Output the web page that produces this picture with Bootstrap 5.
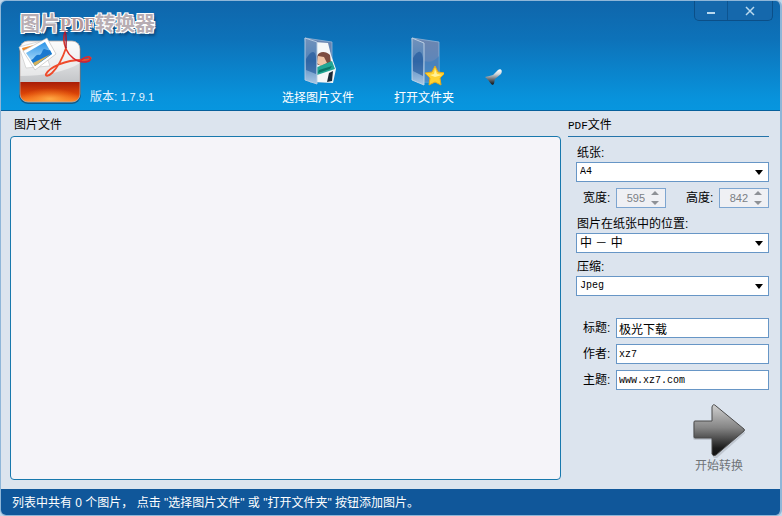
<!DOCTYPE html>
<html lang="zh-CN">
<head>
<meta charset="utf-8">
<meta name="viewport" content="width=device-width, initial-scale=1">
<title>图片PDF转换器</title>
<link href="https://cdn.jsdelivr.net/npm/bootstrap@5.3.0/dist/css/bootstrap.min.css" rel="stylesheet">
<style>
  body { font: 12px/16px "Liberation Sans", "Noto Sans CJK SC", sans-serif; color: #000; background: #c3d8ea; }
  .app-window { border: solid #8fb6d8; border-width: 1px 2px 1px 1px; border-radius: 6px; overflow: hidden; background: #dce4ee; }
  .app-header { height: 110px; background: linear-gradient(#0f66ab, #0d72b9 35%, #0893dc 90%, #0796df); border-bottom: 1px solid #06609c; color: #fff; }
  .brand { width: 264px; padding: 9px 0 0 17px; }
  .app-title { font: bold 20px/26px "Noto Sans CJK SC", sans-serif; color: #b7adb3; white-space: nowrap; padding-left: 2px;
    text-shadow: -1px -1px #fff, 1px -1px #fff, -1px 1px #fff, 1px 1px #fff, 2px 3px 3px #0a3c6c; }
  .latin { font-family: "Liberation Serif", serif; font-size: 18px; line-height: 1; color: #b59a9c; }
  .logo { width: 74px; height: 70px; flex: none; }
  .version { color: #e4f3ff; font-size: 11px; margin: 0 0 1px -2px; white-space: nowrap; }
  .version .cjk { font-size: 12px; }
  .tool { width: 106px; padding-top: 35px; line-height: 16px; }
  .tool svg { width: 40px; height: 54px; display: block; margin: 0 auto; }
  .pin { margin-top: 66px; margin-left: 7px; }
  .win-controls { height: 20px; margin-right: 7px; border: 1px solid #0b4f88; border-top: 0; border-radius: 0 0 5px 5px; background: #1568ac; }
  .win-controls button { color: #b9d9ef; line-height: 0; }
  .win-min { width: 33px; border-right: 1px solid #0d5490 !important; }
  .win-close { width: 44px; }
  button { color: inherit; font: inherit; }
  .section-title { font-size: 12px; line-height: 16px; height: 25px; padding-top: 6px; margin: 0; font-weight: 400; }
  .section-title .mono { font-size: 11px; line-height: 1; }
  .mono { font-family: "Liberation Mono", "Noto Sans CJK SC", monospace; font-size: 10px; }
  .list-pane { padding: 0 0 9px 9px; }
  .file-list { border: 1px solid #1878ad; border-radius: 4px; background: #f5f4f9; }
  .side { width: 219px; padding: 0 11px 0 7px; }
  .options { border-top: 1px solid #2474aa; padding: 8px 0 0 8px; }
  .field-label { height: 17px; display: block; padding-left: 1px; }
  .options .form-select, .options .form-control { height: 20px; min-height: 20px; padding: 0 2px; border: 1px solid #6796c6; border-radius: 0; background-color: #fff; font-size: 12px; line-height: 18px; color: #000; }
  .options .form-select { padding-left: 3px; background-size: 8px 5px; background-position: right 5px center;
    background-image: url("data:image/svg+xml,%3Csvg xmlns='http://www.w3.org/2000/svg' viewBox='0 0 8 5'%3E%3Cpath d='M0 0h8L4 5z'/%3E%3C/svg%3E"); }
  .options .mono { font-family: "Liberation Mono", "Noto Sans CJK SC", monospace; font-size: 10px; }
  .size-row { margin: 6px 0 8px; }
  .zip-label { margin-top: 6px; }
  .side-label { width: 40px; padding-left: 7px; flex: none; white-space: nowrap; }
  .spin { width: 50px; height: 20px; border: 1px solid #7da5d0; background: #eff0f4; }
  .options .spin .form-control { border: 0; height: 18px; min-height: 18px; background: transparent; color: #7b7f85; text-align: right; font-size: 11px; padding: 0; appearance: textfield; -moz-appearance: textfield; }
  .spin input::-webkit-inner-spin-button { appearance: none; margin: 0; }
  .spin-arrows { width: 20px; flex: none; }
  .meta { margin-top: 22px; gap: 6px; }
  .convert { color: #707478; margin-right: 22px; margin-top: 12px; line-height: 16px; }
  .convert svg { display: block; margin: 0 auto; }
  .app-status { height: 26px; background: #10579a; color: #fff; padding: 6px 11px 4px; white-space: nowrap; }
</style>
<script src="https://cdn.jsdelivr.net/npm/bootstrap@5.3.0/dist/js/bootstrap.bundle.min.js"></script>
</head>
<body>
<div class="app-window min-vh-100 d-flex flex-column">
  <header class="app-header d-flex align-items-start">
    <div class="brand">
      <h1 class="app-title m-0">图片<span class="latin">PDF</span>转换器</h1>
      <div class="d-flex align-items-end">
        <svg class="logo overflow-visible" viewBox="0 0 74 70" aria-hidden="true">
          <defs>
            <linearGradient id="lgTop" x2="0" y2="1"><stop stop-color="#f8f8f8"/><stop offset="1" stop-color="#c4c6c9"/></linearGradient>
            <linearGradient id="lgRed" x2="0" y2="1"><stop stop-color="#a81c06"/><stop offset=".6" stop-color="#dc4508"/><stop offset="1" stop-color="#ff8c2c"/></linearGradient>
            <radialGradient id="lgGlow"><stop stop-color="#ffb04a" stop-opacity=".9"/><stop offset="1" stop-color="#ff8a20" stop-opacity="0"/></radialGradient>
            <linearGradient id="lgSky" x2="0" y2="1"><stop stop-color="#2a93e8"/><stop offset="1" stop-color="#c6ebfc"/></linearGradient>
            <linearGradient id="lgAdobe" x2="0" y2="1"><stop stop-color="#a81832"/><stop offset=".5" stop-color="#e8402a"/><stop offset="1" stop-color="#d81f2c"/></linearGradient>
            <clipPath id="cpLogo"><rect x="2" y="5" width="60" height="61" rx="8"/></clipPath>
          </defs>
          <rect x="1" y="6" width="62" height="62" rx="9" fill="#143f5e" opacity=".65"/>
          <g clip-path="url(#cpLogo)">
            <path d="M2 5h60v41H2z" fill="url(#lgTop)"/>
            <path d="M2 5h60v22C48 36 25 40 2 40z" fill="#fff" opacity=".5"/>
            <path d="M2 46h60v20H2z" fill="url(#lgRed)"/>
            <ellipse cx="32" cy="63" rx="30" ry="11" fill="url(#lgGlow)"/>
          </g>
          <rect x="2" y="5" width="60" height="61" rx="8" fill="none" stroke="#b9a9a6" stroke-width=".8"/>
          <path d="M1 11l22-6 9 25-24 2z" fill="#fff" stroke="#c3c3c3" stroke-width=".6"/>
          <path d="M4 12l12-3-11 6z" fill="#f28b2c"/>
          <path d="M5 15L29 2l9 16-21 16z" fill="#fff" stroke="#b5b5b5" stroke-width=".6"/>
          <path d="M8 17L27 6l7 12-17 12z" fill="url(#lgSky)"/>
          <path d="M13 24c4-1 4-6 8-5 3 0 3-5 5-6 2 0 4 2 6 1l2 4-17 12z" fill="#1878cf"/>
          <path d="M15 27l18-9-16 12z" fill="#d9b35a"/>
          <path d="M48 12C44 24 38 33 34 37c-4 4-7 3-6 1 4-7 19-14 36-14 8 0 11-2 7-3" fill="none" stroke="#ef4a2a" stroke-width="1.8" stroke-linecap="round"/>
          <path d="M47-4c-2 5-1 12 1 17 3 7 10 13 18 13 6 0 8-3 5-5-2-1-5 1-8 3" fill="none" stroke="url(#lgAdobe)" stroke-width="1.6" stroke-linecap="round"/>
          <path d="M47-4c2 3 1 11 1 16" fill="none" stroke="#9e1b38" stroke-width="1.4"/>
        </svg>
        <span class="version"><span class="cjk">版本:</span> 1.7.9.1</span>
      </div>
    </div>
    <button type="button" class="tool border-0 bg-transparent px-0 pb-0 text-center">
      <svg viewBox="0 0 40 54" aria-hidden="true">
        <defs>
          <linearGradient id="lgBack" x2="0" y2="1"><stop stop-color="#6d86b0"/><stop offset=".6" stop-color="#5c86bb"/><stop offset="1" stop-color="#5fa3d8"/></linearGradient>
          <linearGradient id="lgFront" x2="0" y2="1"><stop stop-color="#7392bb"/><stop offset=".5" stop-color="#4f82b9"/><stop offset="1" stop-color="#a9c8e6"/></linearGradient>
        </defs>
        <path d="M7 2l27 4v40H12z" fill="url(#lgBack)" stroke="#94b4d6" stroke-width=".8"/>
        <path d="M16 6l14 1 3 12 5 14-3 14-16-1z" fill="#f5f7f8"/>
        <path d="M19 20c2-5 9-5 13-1l1 8-6 4-9-3z" fill="#7c4c40"/>
        <path d="M20 20l6 1 3 6-6 3-4-3z" fill="#efc3a5"/>
        <path d="M17 32l17-7 3 8-18 6z" fill="#22a795"/>
        <path d="M21 34l13-4-2 3-12 4z" fill="#0b7667"/>
        <path d="M31 37l4-2-1 10-5 1z" fill="#1b2937"/>
        <path d="M7 2l12 4v42L7 44z" fill="url(#lgFront)" stroke="#b9cee4" stroke-width=".9"/>
        <path d="M8 23c5-9 9-9 10-2v17L8 34z" fill="#1c5398" opacity=".6"/>
      </svg>选择图片文件
    </button>
    <button type="button" class="tool border-0 bg-transparent px-0 pb-0 text-center">
      <svg viewBox="0 0 40 54" aria-hidden="true">
        <path d="M8 2l27 4v40H13z" fill="url(#lgBack)" stroke="#94b4d6" stroke-width=".8"/>
        <path d="M20 25c6 2 11 0 15-5v26H20z" fill="#3a80bf" opacity=".6"/>
        <path d="M8 2l12 5v42L8 44z" fill="url(#lgFront)" stroke="#c4d6e7" stroke-width=".9"/>
        <path d="M9 22c5-9 9-8 10 1v17L9 35z" fill="#1c5398" opacity=".6"/>
        <path d="M31 30l3 6 7 1-5 5 1 7-6-3-6 3 1-7-5-5 7-1z" fill="#ffd332" stroke="#e3a91c"/>
        <path d="M31 33l2 5 5 1-7 2-5-2 4-1z" fill="#fff29a"/>
      </svg>打开文件夹
    </button>
    <button type="button" class="pin border-0 bg-transparent p-0" aria-label="固定">
      <svg class="d-block" width="20" height="20" viewBox="0 0 20 20" aria-hidden="true">
        <defs><linearGradient id="lgPin" x1="0" y1="0" x2="0" y2="1"><stop stop-color="#fff"/><stop offset=".3" stop-color="#cfd5da"/><stop offset=".6" stop-color="#6f7880"/><stop offset=".9" stop-color="#20272d"/></linearGradient></defs>
        <path d="M1 10c3-1 6-1 8-2l5-5c3-2 5 1 3 4l-6 5c-1 2 0 4-2 6-2 0-4-5-8-8z" fill="url(#lgPin)"/>
      </svg>
    </button>
    <div class="win-controls d-flex ms-auto">
      <button type="button" class="win-min border-0 bg-transparent p-0" aria-label="最小化"><svg width="10" height="8" viewBox="0 0 10 8"><path d="M1 6h8" stroke="currentColor" stroke-width="2"/></svg></button>
      <button type="button" class="win-close border-0 bg-transparent p-0" aria-label="关闭"><svg width="10" height="10" viewBox="0 0 10 10"><path d="M1 1l8 8M9 1L1 9" stroke="currentColor" stroke-width="1.5"/></svg></button>
    </div>
  </header>

  <main class="flex-fill d-flex">
    <section class="list-pane flex-fill d-flex flex-column">
      <h2 class="section-title ps-1">图片文件</h2>
      <div class="file-list flex-fill"></div>
    </section>
    <section class="side flex-shrink-0">
      <h2 class="section-title"><span class="mono">PDF</span>文件</h2>
      <form class="options">
        <label class="field-label" for="paper">纸张:</label>
        <select id="paper" class="form-select mono"><option>A4</option></select>
        <div class="size-row d-flex justify-content-between align-items-center">
          <div class="d-flex align-items-center">
            <label class="side-label" for="pw">宽度:</label>
            <div class="spin d-flex"><input id="pw" type="number" class="form-control" value="595" disabled>
              <svg class="spin-arrows" viewBox="0 0 20 18" aria-hidden="true"><path d="M6 6l4-4 4 4zM6 12l4 4 4-4z" fill="#8e9196"/></svg></div>
          </div>
          <div class="d-flex align-items-center">
            <label class="side-label" for="ph">高度:</label>
            <div class="spin d-flex"><input id="ph" type="number" class="form-control" value="842" disabled>
              <svg class="spin-arrows" viewBox="0 0 20 18" aria-hidden="true"><path d="M6 6l4-4 4 4zM6 12l4 4 4-4z" fill="#8e9196"/></svg></div>
          </div>
        </div>
        <label class="field-label" for="pos">图片在纸张中的位置:</label>
        <select id="pos" class="form-select"><option>中 － 中</option></select>
        <label class="field-label zip-label" for="zip">压缩:</label>
        <select id="zip" class="form-select mono"><option>Jpeg</option></select>
        <div class="meta d-flex flex-column">
          <div class="d-flex align-items-center"><label class="side-label" for="t1">标题:</label><input id="t1" type="text" class="form-control" value="极光下载"></div>
          <div class="d-flex align-items-center"><label class="side-label" for="t2">作者:</label><input id="t2" type="text" class="form-control mono" value="xz7"></div>
          <div class="d-flex align-items-center"><label class="side-label" for="t3">主题:</label><input id="t3" type="text" class="form-control mono" value="www.xz7.com"></div>
        </div>
        <div class="d-flex justify-content-end">
          <button type="button" class="convert border-0 bg-transparent p-0 text-center">
            <svg width="56" height="56" viewBox="0 0 56 56" aria-hidden="true">
              <defs><linearGradient id="lgArrow" x2="0" y2="1"><stop stop-color="#d0d0d0"/><stop offset=".45" stop-color="#858585"/><stop offset=".85" stop-color="#1c1c1c"/><stop offset="1" stop-color="#111"/></linearGradient></defs>
              <path d="M4 20h18V6q1-4 4-1l27 24q2 2 0 3L26 56q-4 1-4-2V38H4q-2 0-2-2V22q0-2 2-2z" fill="#8b929b" opacity=".35"/>
              <path d="M4 19h17V5q1-4 4-1l28 23q1 1 0 2L25 53q-3 2-4-1V36H4q-1 0-1-1V20q0-1 1-1z" fill="url(#lgArrow)" stroke="#4a4a4a"/>
            </svg>开始转换
          </button>
        </div>
      </form>
    </section>
  </main>

  <footer class="app-status">列表中共有 0 个图片， 点击 "选择图片文件" 或 "打开文件夹" 按钮添加图片。</footer>
</div>
</body>
</html>
